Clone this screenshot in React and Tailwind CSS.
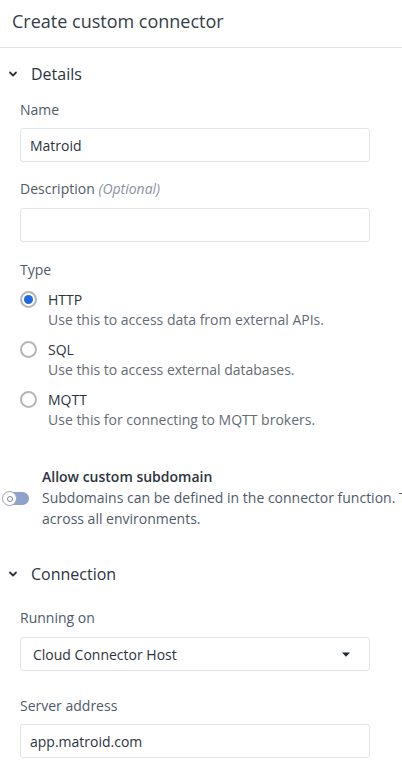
// App.jsx — Create custom connector panel

const FONT = { fontFamily: '"Open Sans", "Noto Sans", sans-serif' };

// ── Small icons ────────────────────────────────────────────────────────────────
const Chevron = () => (
  <svg className="w-[10px] h-[10px] text-[#2d3440]" viewBox="0 0 10 10" fill="none" stroke="currentColor">
    <path d="M2 3.5l3 3 3-3" strokeWidth={1.8} strokeLinecap="round" strokeLinejoin="round" />
  </svg>
);

const Caret = () => (
  <svg className="w-[8px] h-[5px] text-[#1f2937]" viewBox="0 0 8 5" fill="currentColor">
    <path d="M0 0.5h8L4 4.8z" />
  </svg>
);

const TYPES = [
  { id: "http", label: "HTTP", desc: "Use this to access data from external APIs.", checked: true },
  { id: "sql", label: "SQL", desc: "Use this to access external databases." },
  { id: "mqtt", label: "MQTT", desc: "Use this for connecting to MQTT brokers." },
];

const SectionHeader = ({ title, className = "" }) => (
  <div className={`h-[52px] flex items-center pl-[8px] gap-[13px] ${className}`}>
    <Chevron />
    <span className="text-[16px] text-[#2d3440]">{title}</span>
  </div>
);

const Label = ({ children, className = "" }) => (
  <p className={`text-[14px] leading-5 text-[#4f5a6b] ${className}`}>{children}</p>
);

const Field = ({ value, className = "" }) => (
  <div className={`h-[34px] w-[350px] border border-[#e2e4e8] rounded-[3px] bg-white flex items-center px-[9px] text-[14px] text-[#2d3440] ${className}`}>
    {value}
  </div>
);

const Radio = ({ checked }) => (
  <div className="w-[17px] h-[17px] rounded-full border-2 border-[#b3b6ba] flex items-center justify-center">
    {checked && <div className="w-[9px] h-[9px] rounded-full bg-[#1e6ae1]" />}
  </div>
);

export default function App() {
  return (
    <div className="w-[402px] h-[771px] overflow-hidden bg-white" style={FONT}>
      {/* ── Header ─────────────────────────────────────────────────────────── */}
      <header className="h-[48px] flex items-center px-3 border-b border-[#e2e2e2]">
        <h1 className="text-[18px] text-[#343d4a] -mt-[5px]">Create custom connector</h1>
      </header>

      {/* ── Details ────────────────────────────────────────────────────────── */}
      <SectionHeader title="Details" />
      <div className="px-5">
        <Label className="mb-2">Name</Label>
        <Field value="Matroid" />

        <Label className="mt-[17px] mb-[9px]">
          Description <span className="italic text-[#8a93a0]">(Optional)</span>
        </Label>
        <Field value="" />

        <Label className="mt-[18px] mb-[9px]">Type</Label>
        <div className="flex flex-col gap-[9px]">
          {TYPES.map((t) => (
            <div key={t.id}>
              <div className="flex items-center gap-[11px] h-5">
                <Radio checked={t.checked} />
                <span className="text-[14px] text-[#2d3440]">{t.label}</span>
              </div>
              <p className="pl-[28px] text-[14px] leading-[21px] text-[#646b75]">{t.desc}</p>
            </div>
          ))}
        </div>
      </div>

      {/* ── Custom subdomain toggle ────────────────────────────────────────── */}
      <div className="mt-[37px] flex pl-[3px]">
        <div className="w-[39px] shrink-0 pt-[25px]">
          <div className="relative w-[26px] h-[13px] rounded-full bg-[#8fa1cc]">
            <div className="absolute -left-[1px] -top-[1px] w-[15px] h-[15px] rounded-full bg-white border border-[#9aa3b5] flex items-center justify-center">
              <div className="w-[6px] h-[6px] rounded-full border border-[#7b8496]" />
            </div>
          </div>
        </div>
        <div className="text-[14px] leading-[21px] text-[#4f5a6b]">
          <p className="leading-5 font-semibold text-[#2d3440]">Allow custom subdomain</p>
          <p className="whitespace-nowrap">Subdomains can be defined in the connector function. They are shared</p>
          <p>across all environments.</p>
        </div>
      </div>

      {/* ── Connection ─────────────────────────────────────────────────────── */}
      <SectionHeader title="Connection" className="mt-[19px]" />
      <div className="px-5">
        <Label className="mt-2 mb-[9px]">Running on</Label>
        <div className="h-[34px] w-[350px] border border-[#e2e4e8] rounded-[3px] flex items-center justify-between pl-[12px] pr-[19px] text-[14px] text-[#2d3440]">
          <span>Cloud Connector Host</span>
          <Caret />
        </div>

        <Label className="mt-[25px] mb-2">Server address</Label>
        <Field value="app.matroid.com" />
      </div>
    </div>
  );
}
